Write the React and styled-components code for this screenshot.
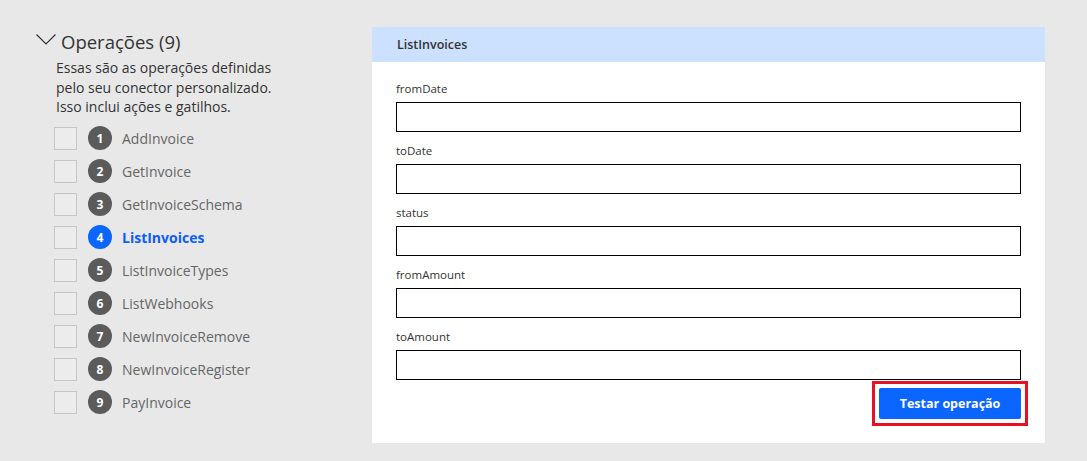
import React from 'react';
import styled, { createGlobalStyle } from 'styled-components';

const operations = [
  'AddInvoice',
  'GetInvoice',
  'GetInvoiceSchema',
  'ListInvoices',
  'ListInvoiceTypes',
  'ListWebhooks',
  'NewInvoiceRemove',
  'NewInvoiceRegister',
  'PayInvoice',
];

const params = ['fromDate', 'toDate', 'status', 'fromAmount', 'toAmount'];

const App = () => {
  const active = 'ListInvoices';

  return (
    <>
      <GlobalStyle />
      <Page>
        <Sidebar>
          <SectionTitle>
            <Chevron viewBox="0 0 20 11">
              <polyline points="0.5,0.5 10,10 19.5,0.5" />
            </Chevron>
            Operações (9)
          </SectionTitle>
          <Description>
            Essas são as operações definidas
            <br />
            pelo seu conector personalizado.
            <br />
            Isso inclui ações e gatilhos.
          </Description>
          <OpList>
            {operations.map((op, i) => (
              <OpRow key={op}>
                <Check />
                <Badge active={op === active}>{i + 1}</Badge>
                <OpName active={op === active}>{op}</OpName>
              </OpRow>
            ))}
          </OpList>
        </Sidebar>

        <Panel>
          <PanelHeader>ListInvoices</PanelHeader>
          <PanelBody>
            {params.map(p => (
              <Field key={p}>
                <Label>{p}</Label>
                <Input />
              </Field>
            ))}
            <Actions>
              <Highlight>
                <TestButton>Testar operação</TestButton>
              </Highlight>
            </Actions>
          </PanelBody>
        </Panel>
      </Page>
    </>
  );
};

const GlobalStyle = createGlobalStyle`
  body {
    margin: 0;
    background: #e8e8e8;
    font-family: "Open Sans", "Noto Sans", sans-serif;
  }
`;

const Page = styled.div`
  display: flex;
  align-items: flex-start;
  height: 461px;
  padding-top: 27px;
  box-sizing: border-box;
`;

const Sidebar = styled.div`
  width: 336px;
  margin-left: 36px;
  padding-top: 3px;
`;

const SectionTitle = styled.div`
  display: flex;
  align-items: center;
  gap: 5px;
  font-size: 18.5px;
  color: #333;
  height: 22px;
`;

const Chevron = styled.svg`
  width: 20px;
  height: 11px;
  margin-top: -3px;
  fill: none;
  stroke: #333;
  stroke-width: 1.2;
`;

const Description = styled.div`
  margin: 6px 0 0 20px;
  font-size: 14px;
  line-height: 19.5px;
  color: #333;
`;

const OpList = styled.div`
  margin: 5px 0 0 18px;
`;

const OpRow = styled.div`
  display: flex;
  align-items: center;
  height: 33px;
`;

const Check = styled.div`
  width: 21px;
  height: 21px;
  border: 1px solid #c6c6c6;
  background: #ececec;
`;

const Badge = styled.div`
  width: 24px;
  height: 24px;
  margin-left: 11px;
  border-radius: 50%;
  background: ${p => (p.active ? '#0a66ff' : '#5b5b5b')};
  color: #fff;
  font-size: 12px;
  font-weight: 700;
  display: flex;
  align-items: center;
  justify-content: center;
`;

const OpName = styled.span`
  margin-left: 10px;
  font-size: 14px;
  color: ${p => (p.active ? '#0a5cff' : '#666')};
  font-weight: ${p => (p.active ? 700 : 400)};
`;

const Panel = styled.div`
  width: 673px;
  height: 416px;
  background: #fff;
`;

const PanelHeader = styled.div`
  height: 35px;
  background: #cce0ff;
  padding-left: 25px;
  display: flex;
  align-items: center;
  font-size: 12.5px;
  font-weight: 600;
  color: #333;
`;

const PanelBody = styled.div`
  padding: 19px 24px 0 24px;
`;

const Field = styled.div`
  margin-bottom: 11px;
`;

const Label = styled.div`
  font-size: 11.5px;
  line-height: 16px;
  color: #333;
  margin-bottom: 5px;
`;

const Input = styled.div`
  height: 28px;
  border: 1px solid #000;
`;

/* the red frame sits 4px outside the button, so pull it back up and right */
const Actions = styled.div`
  display: flex;
  justify-content: flex-end;
  margin: -10px -7px 0 0;
`;

const Highlight = styled.div`
  display: flex;
  padding: 4px;
  border: 3px solid #e81123;
`;

const TestButton = styled.button`
  width: 142px;
  height: 31px;
  border: none;
  border-radius: 2px;
  background: #0a66ff;
  color: #fff;
  font-family: "Open Sans", "Noto Sans", sans-serif;
  font-size: 12.5px;
  font-weight: 700;
`;

export default App;
